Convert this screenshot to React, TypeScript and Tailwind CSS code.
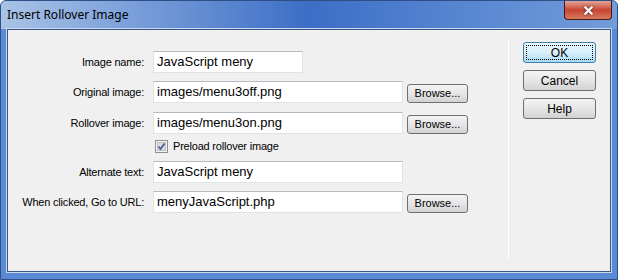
import { X } from 'lucide-react';

const ui = { fontFamily: '"Liberation Sans", Arial, sans-serif' };

function Field({ value, wide = true }: { value: string; wide?: boolean }) {
  return (
    <div
      className={`h-[22px] ${wide ? 'w-[250px]' : 'w-[150px]'} bg-white border border-[#dfe3e8] border-t-[#b7bac0] flex items-center pl-[3px] text-[13px] text-black`}
    >
      {value}
    </div>
  );
}

function BrowseButton() {
  return (
    <button className="h-[19px] w-[61px] mt-[3px] rounded-[3px] border border-[#707070] bg-gradient-to-b from-[#f4f4f4] via-[#e6e6e6] to-[#d2d2d2] text-[11px] text-black flex items-center justify-center leading-none">
      Browse...
    </button>
  );
}

function Row({ label, children }: { label: string; children: React.ReactNode }) {
  return (
    <div className="flex items-start h-[22px]">
      <div className="w-[137px] h-[22px] text-right text-[11px] tracking-[-0.2px] text-black flex items-center justify-end pr-[1px]">
        {label}
      </div>
      <div className="ml-[8px] flex items-start gap-[4px]">{children}</div>
    </div>
  );
}

export default function App() {
  return (
    <div
      className="w-[618px] h-[280px] flex flex-col bg-[#5a8ad3] overflow-hidden rounded-t-[6px] border border-[#2e4f86]"
      style={ui}
    >
      {/* Title bar */}
      <div className="h-[28px] shrink-0 flex items-start bg-gradient-to-r from-[#a9c3e6] via-[#3d6ec6] to-[#729ddb]">
        <span className="ml-[6px] mt-[8px] text-[12px] text-black leading-none" style={{ fontFamily: '"Noto Sans", "Open Sans", sans-serif' }}>
          Insert Rollover Image
        </span>
        <button className="ml-auto mr-[5px] w-[48px] h-[19px] rounded-b-[4px] border border-[#4a1810] border-t-0 bg-gradient-to-b from-[#e0a49a] via-[#c74333] to-[#d57b5e] flex items-center justify-center">
          <X size={13} strokeWidth={4} className="text-white drop-shadow-[0_0_1px_#333]" />
        </button>
      </div>

      {/* Client area */}
      <div className="mx-[6px] mb-[7px] flex-1 flex bg-[#f0f0f0] border border-[#3a5685] shadow-[0_0_0_1px_#c9d9ef]">
        <div className="w-[500px] flex flex-col pt-[21px]">
          <Row label="Image name:">
            <Field value="JavaScript meny" wide={false} />
          </Row>
          <div className="h-[8px]" />
          <Row label="Original image:">
            <Field value="images/menu3off.png" />
            <BrowseButton />
          </Row>
          <div className="h-[9px]" />
          <Row label="Rollover image:">
            <Field value="images/menu3on.png" />
            <BrowseButton />
          </Row>
          <div className="ml-[147px] mt-[6px] h-[12px] flex items-center gap-[5px]">
            <svg width="13" height="13" viewBox="0 0 13 13">
              <rect x="0.5" y="0.5" width="12" height="12" fill="#f4f4f4" stroke="#8e8f8f" />
              <rect x="2.5" y="2.5" width="8" height="8" fill="#dcdcdc" stroke="#c0c0c0" />
              <path d="M3.5 6.5 L5.5 9 L9.5 3.5" fill="none" stroke="#4b5f99" strokeWidth="1.8" />
            </svg>
            <span className="text-[11px] tracking-[-0.2px] text-black">Preload rollover image</span>
          </div>
          <div className="h-[9px]" />
          <Row label="Alternate text:">
            <Field value="JavaScript meny" />
          </Row>
          <div className="h-[8px]" />
          <Row label="When clicked, Go to URL:">
            <Field value="menyJavaScript.php" />
            <BrowseButton />
          </Row>
        </div>

        {/* Separator */}
        <div className="mt-[10px] h-[219px] w-[1px] bg-[#a0a0a0] border-r border-white" />

        {/* Buttons */}
        <div className="ml-[14px] pt-[12px] flex flex-col gap-[7px]">
          <button className="h-[21px] w-[73px] rounded-[3px] border border-[#3c7fb1] bg-gradient-to-b from-[#eaf6fd] via-[#d9f0fc] to-[#a7d9f5] p-[2px] text-[12px] text-black">
            <span className="w-full h-full flex items-center justify-center border border-dotted border-black">OK</span>
          </button>
          <button className="h-[21px] w-[73px] rounded-[3px] border border-[#707070] bg-gradient-to-b from-[#f4f4f4] via-[#e6e6e6] to-[#d2d2d2] text-[12px] text-black flex items-center justify-center">
            Cancel
          </button>
          <button className="h-[21px] w-[73px] rounded-[3px] border border-[#707070] bg-gradient-to-b from-[#f4f4f4] via-[#e6e6e6] to-[#d2d2d2] text-[12px] text-black flex items-center justify-center">
            Help
          </button>
        </div>
      </div>
    </div>
  );
}
